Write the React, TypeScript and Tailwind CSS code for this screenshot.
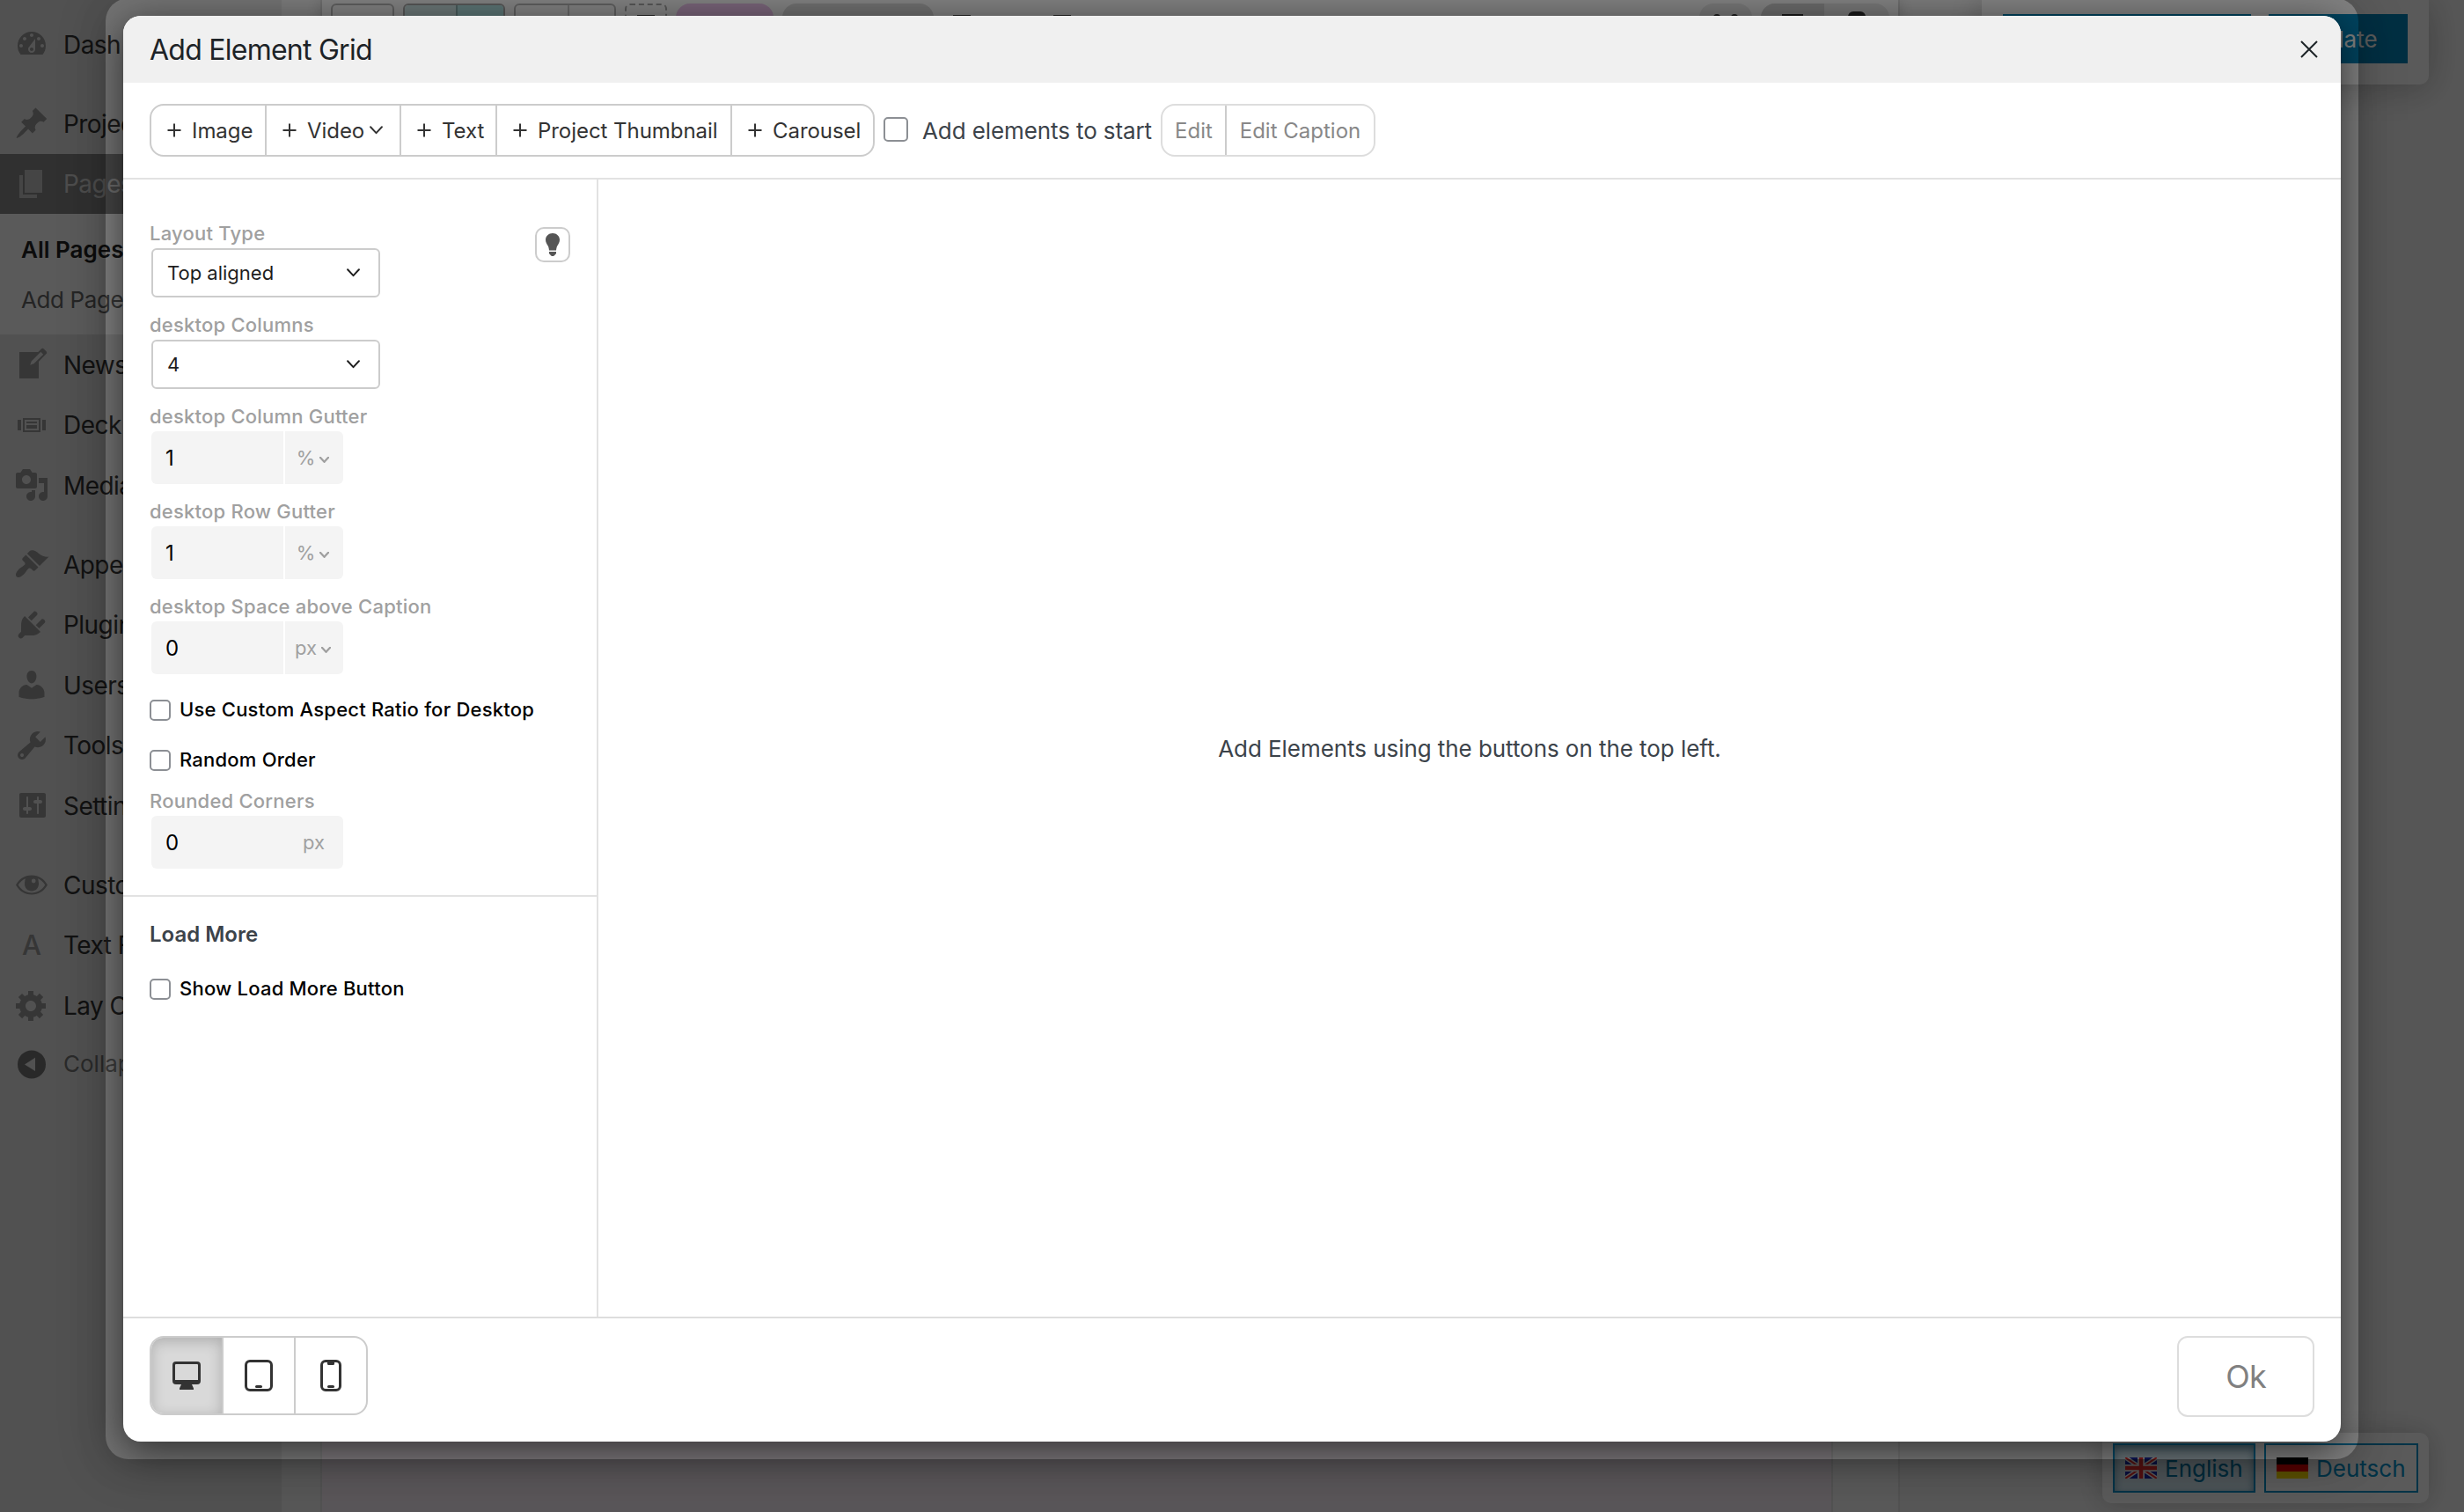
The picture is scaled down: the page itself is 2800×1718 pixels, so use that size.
import { ReactNode } from 'react';
import clsx from 'clsx';

interface MenuEntry {
    label: string;
    icon: ReactNode;
    active?: boolean;
}

const paths = {
    dashboard: 'M3.76 16h12.48c1.1-1.37 1.76-3.11 1.76-5 0-4.42-3.58-8-8-8s-8 3.58-8 8c0 1.89.66 3.63 1.76 5zM10 4c.55 0 1 .45 1 1s-.45 1-1 1-1-.45-1-1 .45-1 1-1zM6 6c.55 0 1 .45 1 1s-.45 1-1 1-1-.45-1-1 .45-1 1-1zm8 0c.55 0 1 .45 1 1s-.45 1-1 1-1-.45-1-1 .45-1 1-1zm-5.37 5.55L12 7v6c0 1.1-.9 2-2 2s-2-.9-2-2c0-.57.24-1.08.63-1.45zM4 10c.55 0 1 .45 1 1s-.45 1-1 1-1-.45-1-1 .45-1 1-1zm12 0c.55 0 1 .45 1 1s-.45 1-1 1-1-.45-1-1 .45-1 1-1zm-5 3c0-.55-.45-1-1-1s-1 .45-1 1 .45 1 1 1 1-.45 1-1z',
    pin: 'M10.44 3.02l1.82-1.82 6.36 6.35-1.83 1.82c-1.05-.68-2.48-.57-3.41.36l-.75.75c-.92.93-1.04 2.35-.35 3.41l-1.83 1.82-2.41-2.41-2.8 2.79c-.42.42-3.38 2.71-3.8 2.29s1.86-3.39 2.28-3.81l2.79-2.79L4.1 9.36l1.83-1.82c1.05.69 2.48.57 3.4-.36l.75-.75c.93-.92 1.05-2.35.36-3.41z',
    page: 'M6 15V2h10v13H6zm-1 1h8v2H3V5h2v11z',
    write: 'M16.89 1.2l1.41 1.41c.39.39.39 1.02 0 1.41L14 8.33V18H3V3h10.67l1.8-1.8c.4-.39 1.03-.4 1.42 0zm-5.66 8.48l5.37-5.36-1.42-1.42-5.36 5.37-.71 2.12z',
    slides: 'M5 14V6h10v8H5zm-3-1V7h2v6H2zm4-6v6h8V7H6zm10 6V7h2v6h-2zm-3-5v1H7V8h6zm0 2v2H7v-2h6z',
    media: 'M13 11V4c0-.55-.45-1-1-1h-1.67L9 1H5L3.67 3H2c-.55 0-1 .45-1 1v7c0 .55.45 1 1 1h10c.55 0 1-.45 1-1zM7 4.5c1.38 0 2.5 1.12 2.5 2.5S8.38 9.5 7 9.5 4.5 8.38 4.5 7 5.62 4.5 7 4.5zM14 6h5v10.5c0 1.38-1.12 2.5-2.5 2.5S14 17.88 14 16.5s1.12-2.5 2.5-2.5c.17 0 .34.02.5.05V9h-3V6zm-4 8.05V13h2v3.5c0 1.38-1.12 2.5-2.5 2.5S7 17.88 7 16.5 8.12 14 9.5 14c.17 0 .34.02.5.05z',
    brush: 'M14.48 11.06L7.41 3.99l1.5-1.5c.5-.56 2.3-.47 3.51.32 1.21.8 1.43 1.28 2.91 2.1 1.18.64 2.45 1.26 4.45.85zm-.71.71L6.7 4.7 4.93 6.47c-.39.39-.39 1.02 0 1.41l1.06 1.06c.39.39.39 1.03 0 1.42-.6.6-1.43 1.11-2.21 1.69-.35.26-.7.53-1.01.84C1.43 14.23.4 16.08 1.4 17.07c.99 1 2.84-.03 4.18-1.36.31-.31.58-.66.85-1.02.57-.78 1.08-1.61 1.69-2.21.39-.39 1.02-.39 1.41 0l1.06 1.06c.39.39 1.02.39 1.41 0z',
    plug: 'M13.11 4.36L9.87 7.6 8 5.73l3.24-3.24c.35-.34 1.05-.2 1.56.32.52.51.66 1.21.31 1.55zm-8 1.77l.91-1.12 9.01 9.01-1.19.84c-.71.71-2.63 1.16-3.82 1.16H6.14L4.9 17.26c-.59.59-1.54.59-2.12 0-.59-.58-.59-1.53 0-2.12l1.24-1.24v-3.88c0-1.13.4-3.19 1.09-3.89zm7.26 3.97l3.24-3.24c.34-.35 1.04-.21 1.55.31.52.51.66 1.21.31 1.55l-3.24 3.25z',
    user: 'M10 9.25c-2.27 0-2.73-3.44-2.73-3.44C7 4.02 7.82 2 9.97 2c2.16 0 2.98 2.02 2.71 3.81 0 0-.41 3.44-2.68 3.44zm0 2.57L12.72 10c2.39 0 4.52 2.33 4.52 4.53v2.49s-3.65 1.13-7.24 1.13c-3.65 0-7.24-1.13-7.24-1.13v-2.49c0-2.25 1.94-4.48 4.47-4.48z',
    wrench: 'M16.68 9.77c-1.34 1.34-3.3 1.67-4.95.99l-5.41 6.52c-.99.99-2.59.99-3.58 0s-.99-2.59 0-3.57l6.52-5.42c-.68-1.65-.35-3.61.99-4.95 1.28-1.28 3.12-1.62 4.72-1.06l-2.89 2.89 2.82 2.82 2.86-2.87c.53 1.58.18 3.39-1.08 4.65zM3.81 16.21c.4.39 1.04.39 1.43 0 .4-.4.4-1.04 0-1.43-.39-.4-1.03-.4-1.43 0-.39.39-.39 1.03 0 1.43z',
    sliders: 'M18 16V4c0-.55-.45-1-1-1H4c-.55 0-1 .45-1 1v12c0 .55.45 1 1 1h13c.55 0 1-.45 1-1zM8 11h1c.55 0 1 .45 1 1s-.45 1-1 1H8v1.5c0 .28-.22.5-.5.5s-.5-.22-.5-.5V13H6c-.55 0-1-.45-1-1s.45-1 1-1h1V5.5c0-.28.22-.5.5-.5s.5.22.5.5V11zm5-2h-1c-.55 0-1-.45-1-1s.45-1 1-1h1V5.5c0-.28.22-.5.5-.5s.5.22.5.5V7h1c.55 0 1 .45 1 1s-.45 1-1 1h-1v5.5c0 .28-.22.5-.5.5s-.5-.22-.5-.5V9z',
    eye: 'M10 4.8C6 4.8 2.8 7 1 10.3c1.8 3.3 5 5.5 9 5.5s7.2-2.2 9-5.5C17.2 7 14 4.8 10 4.8zm0 9.9c-3.3 0-6-1.7-7.6-4.4C3.3 8.6 4.8 7.3 6.5 6.6 6.2 7.3 6 8.8 6 9.8c0 2.2 1.8 4 4 4s4-1.800 4-4c0-1-.2-2.500-.5-3.200 1.700.7 3.200 2 4.100 3.700-1.600 2.700-4.300 4.400-7.600 4.400zM11.100 6.800a1.200 1.200 0 110 2.400 1.200 1.200 0 010-2.400z',
    gear: 'M18 12h-2.18c-.17.7-.44 1.35-.81 1.93l1.54 1.54-2.1 2.1-1.54-1.54c-.58.36-1.23.63-1.91.79V19H8v-2.18c-.68-.16-1.33-.43-1.91-.79l-1.54 1.54-2.12-2.12 1.54-1.54c-.36-.58-.63-1.23-.79-1.91H1V9.03h2.17c.16-.7.44-1.35.8-1.94L2.43 5.55l2.1-2.1 1.54 1.54c.58-.37 1.24-.64 1.93-.81V2h3v2.18c.68.16 1.33.43 1.91.79l1.54-1.54 2.12 2.12-1.54 1.54c.36.59.64 1.24.8 1.94H18V12zm-8.5 1.5c1.66 0 3-1.34 3-3s-1.34-3-3-3-3 1.34-3 3 1.34 3 3 3z',
    collapse: 'M10 2.2a8 8 0 100 16 8 8 0 000-16zM12 6.400v7.600L6 10.200z',
};

function Glyph({ d }: { d: string }) {
    return (
        <svg viewBox="0 0 20 20" className="w-10 h-10 shrink-0" fill="currentColor" fillRule="evenodd">
            <path d={d} />
        </svg>
    );
}

const firstGroup: MenuEntry[] = [
    { label: 'Projec', icon: <Glyph d={paths.pin} /> },
    { label: 'Pages', icon: <Glyph d={paths.page} />, active: true },
];

const contentGroup: MenuEntry[] = [
    { label: 'News', icon: <Glyph d={paths.write} /> },
    { label: 'Deck', icon: <Glyph d={paths.slides} /> },
    { label: 'Media', icon: <Glyph d={paths.media} /> },
];

const adminGroup: MenuEntry[] = [
    { label: 'Appe', icon: <Glyph d={paths.brush} /> },
    { label: 'Plugin', icon: <Glyph d={paths.plug} /> },
    { label: 'Users', icon: <Glyph d={paths.user} /> },
    { label: 'Tools', icon: <Glyph d={paths.wrench} /> },
    { label: 'Settin', icon: <Glyph d={paths.sliders} /> },
];

const themeGroup: MenuEntry[] = [
    { label: 'Custo', icon: <Glyph d={paths.eye} /> },
    { label: 'Text F', icon: <span className="w-10 text-center text-[31px] font-medium">A</span> },
    { label: 'Lay O', icon: <Glyph d={paths.gear} /> },
];

function MenuGroup({ items }: { items: MenuEntry[] }) {
    return (
        <ul>
            {items.map(item => (
                <li key={item.label} className={clsx('h-[68.5px] pl-4 flex items-center gap-4', item.active && 'bg-[#888]')}>
                    <span className={clsx('flex', item.active ? 'text-[#c4c4c4]' : 'text-[#999]')}>{item.icon}</span>
                    <span className={clsx('pt-px text-[28px] tracking-[-0.55px] whitespace-nowrap', item.active ? 'text-[#d8d8d8]' : 'text-[#333]')}>{item.label}</span>
                </li>
            ))}
        </ul>
    );
}

function AdminMenu() {
    return (
        <aside className="w-80 shrink-0 pt-4 bg-[#e5e5e5]">
            <MenuGroup items={[{ label: 'Dash', icon: <Glyph d={paths.dashboard} /> }]} />
            <div className="h-[21.5px]" />
            <MenuGroup items={firstGroup} />
            <div className="h-[137px] pt-3 pl-6 bg-white text-[26px]">
                <div className="h-[57px] flex items-center font-semibold text-[#222]">All Pages</div>
                <div className="h-[57px] flex items-center tracking-[-0.4px] text-[#686868]">Add Page</div>
            </div>
            <MenuGroup items={contentGroup} />
            <div className="h-[21.5px]" />
            <MenuGroup items={adminGroup} />
            <div className="h-[21.5px]" />
            <MenuGroup items={themeGroup} />
            <div className="h-[64px] pl-4 flex items-center gap-4 text-[26px] text-[#777] whitespace-nowrap">
                <Glyph d={paths.collapse} />
                Collap
            </div>
        </aside>
    );
}

// Page builder behind the dialog
function Builder() {
    return (
        <main className="flex-1 pl-[44px] flex">
            <div className="w-[1795px] border-x-2 border-[#e6e6e6] bg-[#fbfbfb] flex flex-col">
                <div className="h-[60px] pl-[10px] pt-1 flex bg-white shadow-[0_0_20px_rgba(0,0,0,0.2)]">
                    <div className="w-[72px] h-10 border-2 border-[#bbb] rounded-md mr-[10px]" />
                    <div className="w-[116px] h-10 border-2 border-[#aaa] rounded-md mr-[10px] flex overflow-hidden">
                        <div className="w-[60px] bg-[#d3eaea] border-r-2 border-[#8fb3b3]" />
                        <div className="flex-1 bg-[#b4e6e6]" />
                    </div>
                    <div className="w-[116px] h-10 border-2 border-[#bbb] rounded-md mr-[10px] flex">
                        <div className="w-[61px] border-r-2 border-[#ccc]" />
                    </div>
                    <div className="w-12 h-10 border-2 border-dashed border-[#aaa] rounded-md mr-[10px] flex justify-center pt-[11px]">
                        <div className="w-5 h-1 bg-[#444]" />
                    </div>
                    <div className="w-[111px] h-10 rounded-2xl bg-[#eec4ee] mr-[10px]" />
                    <div className="w-[172px] h-10 rounded-2xl bg-[#dcdcdc] mr-[22px]" />
                    <div className="w-5 h-1 mt-[13px] bg-[#444] mr-[94px]" />
                    <div className="w-5 h-1 mt-[13px] bg-[#444]" />
                    <div className="w-[60px] h-10 rounded-2xl bg-[#eaeaea] ml-auto mr-[10px] flex justify-center gap-3 pt-3">
                        <div className="w-2 h-2 rounded-full bg-[#333]" />
                        <div className="w-2 h-2 rounded-full bg-[#333]" />
                    </div>
                    <div className="w-[146px] h-10 rounded-2xl bg-[#eaeaea] mr-[10px] flex overflow-hidden">
                        <div className="w-[72px] bg-[#d2d2d2] flex justify-center pt-3">
                            <div className="w-6 h-2 bg-[#333]" />
                        </div>
                        <div className="flex-1 flex justify-center pt-[9px]">
                            <div className="w-5 h-8 rounded-md bg-[#333]" />
                        </div>
                    </div>
                </div>
                <div className="flex-1 w-[1717px] bg-[#fdf3fa] border-r-2 border-[#e6e6e6]" />
            </div>
        </main>
    );
}

function PublishBar() {
    return (
        <div className="absolute top-0 right-[40px] w-[508px] h-24 pt-4 pr-6 flex justify-end gap-5 bg-white rounded-b-[10px] shadow-[0_4px_40px_rgba(0,0,0,0.25)]">
            <div className="w-[282px] h-14 bg-[#0085ba]" />
            <div className="w-[158px] h-14 bg-[#0085ba] text-white text-[26px] flex items-center justify-center">Update</div>
        </div>
    );
}

function FlagUK() {
    return (
        <svg viewBox="0 0 36 24" className="w-9 h-6">
            <rect width="36" height="24" fill="#1c2cb0" />
            <path d="M0 0l36 24M36 0L0 24" stroke="#fff" strokeWidth="5" />
            <path d="M0 0l36 24M36 0L0 24" stroke="#f03030" strokeWidth="2" />
            <path d="M18 0v24M0 12h36" stroke="#fff" strokeWidth="8" />
            <path d="M18 0v24M0 12h36" stroke="#f03030" strokeWidth="4.5" />
        </svg>
    );
}

function FlagDE() {
    return (
        <svg viewBox="0 0 36 24" className="w-9 h-6">
            <rect width="36" height="8" fill="#000" />
            <rect y="8" width="36" height="8" fill="#f00000" />
            <rect y="16" width="36" height="8" fill="#ffe000" />
        </svg>
    );
}

function LanguageSwitch() {
    return (
        <div className="absolute right-10 bottom-[10px] w-[371px] h-20 p-3 flex gap-[10px] bg-white rounded-[10px] shadow-[0_0_30px_rgba(0,0,0,0.2)] text-[26px] text-[#0090c8]">
            <div className="w-[162px] h-14 pl-3 flex items-center gap-[9px] border-2 border-[#0090c8] bg-[#d8edf6] shadow-[inset_0_4px_10px_rgba(0,80,115,0.5)] text-[#0077a5]">
                <FlagUK />
                English
            </div>
            <div className="w-[175px] h-14 pl-3 flex items-center gap-[9px] border-2 border-[#0090c8]">
                <FlagDE />
                Deutsch
            </div>
        </div>
    );
}

function Chevron({ small }: { small?: boolean }) {
    return (
        <svg viewBox="0 0 14 9" className={small ? 'w-[11px] h-[7px] mt-1' : 'w-[15px] h-[10px]'} fill="none" stroke="currentColor" strokeWidth={small ? 3 : 1.8} strokeLinecap="round" strokeLinejoin="round">
            <path d="M1 1l6 6.500L13 1" />
        </svg>
    );
}

function AddButton({ label, className, dropdown }: { label: string, className: string, dropdown?: boolean }) {
    return (
        <button className={clsx('pl-[18px] flex items-center border-[#ccc] text-left whitespace-nowrap', className)}>
            <svg viewBox="0 0 16 16" className="w-4 h-4 mr-3" stroke="currentColor" strokeWidth="2">
                <path d="M8 .5v15M.5 8h15" />
            </svg>
            <span className="pt-0.5 tracking-[-0.05px]">{label}</span>
            {dropdown && <span className="ml-[6px]"><Chevron /></span>}
        </button>
    );
}

function FieldLabel({ children }: { children: ReactNode }) {
    return <div className="h-8 pb-0.5 flex items-center text-[22px] font-medium tracking-[0.22px] text-[#a0a0a0] whitespace-nowrap">{children}</div>;
}

function SelectField({ label, value }: { label: string, value: string }) {
    return (
        <div>
            <FieldLabel>{label}</FieldLabel>
            <div className="ml-0.5 w-[260px] h-14 pl-4 pr-[21px] flex items-center justify-between border-2 border-[#ccc] rounded-md text-[22px] text-[#1e1e1e]">
                {value}
                <Chevron />
            </div>
        </div>
    );
}

function UnitField({ label, value, unit, fixed }: { label: string, value: string, unit: string, fixed?: boolean }) {
    return (
        <div>
            <FieldLabel>{label}</FieldLabel>
            <div className={clsx('ml-0.5 w-[218px] h-[60px] flex rounded-md overflow-hidden', !fixed && 'gap-0.5')}>
                <div className="w-[150px] pl-4 pt-0.5 flex items-center bg-[#f4f4f4] text-2xl text-black">{value}</div>
                <div className={clsx('flex-1 flex items-center bg-[#f4f4f4] text-[22px] text-[#a0a0a0]', fixed ? 'pl-[22px]' : 'justify-center gap-[5px] pr-[3px]')}>
                    {unit}
                    {!fixed && <Chevron small />}
                </div>
            </div>
        </div>
    );
}

function CheckRow({ label }: { label: string }) {
    return (
        <label className="h-6 flex items-center gap-[10px] text-[22px] font-medium tracking-[0.22px] text-black whitespace-nowrap">
            <span className="w-6 h-6 border-2 border-[#8c8f94] rounded-[5px]" />
            <span className="-mt-0.5">{label}</span>
        </label>
    );
}

function SettingsPanel() {
    return (
        <div className="w-[540px] shrink-0 border-r-2 border-[#e2e2e2]">
            <div className="h-[815px] pl-[30px] pr-[30px] pt-[46px] flex justify-between border-b-2 border-[#e2e2e2]">
                <div className="flex flex-col">
                    <div className="flex flex-col gap-4">
                        <SelectField label="Layout Type" value="Top aligned" />
                        <SelectField label="desktop Columns" value="4" />
                        <UnitField label="desktop Column Gutter" value="1" unit="%" />
                        <UnitField label="desktop Row Gutter" value="1" unit="%" />
                        <UnitField label="desktop Space above Caption" value="0" unit="px" />
                    </div>
                    <div className="pt-[29px] pb-[19px] flex flex-col gap-[33px]">
                        <CheckRow label="Use Custom Aspect Ratio for Desktop" />
                        <CheckRow label="Random Order" />
                    </div>
                    <UnitField label="Rounded Corners" value="0" unit="px" fixed />
                </div>
                <button className="w-10 h-10 mt-2 -ml-10 shrink-0 flex items-center justify-center border-2 border-[#ccc] rounded-[10px] text-[#555]">
                    <svg viewBox="0 0 16 26" className="w-4 h-[26px]" fill="currentColor">
                        <path d="M8 0C3.500 0 0 3.300 0 7.500c0 3 1.500 4.900 2.800 7 .8 1.400 1 3.500 1.200 5h8c.2-1.500.4-3.600 1.200-5 1.300-2.100 2.800-4 2.800-7C16 3.300 12.500 0 8 0zM4 21h8v1.800c0 .6-.6 1.200-1.200 1.400-.4 1-1.500 1.800-2.800 1.800s-2.400-.8-2.800-1.800C4.600 24 4 23.400 4 22.800z" />
                    </svg>
                </button>
            </div>
            <div className="pl-[30px] pt-7">
                <h3 className="h-[30px] leading-[30px] mb-[35px] text-2xl font-semibold text-[#3c434a]">Load More</h3>
                <CheckRow label="Show Load More Button" />
            </div>
        </div>
    );
}

function DeviceSwitch() {
    return (
        <div className="w-[248px] h-[90px] flex border-2 border-[#ccc] rounded-2xl overflow-hidden text-[#333]">
            <button className="w-[82px] flex items-center justify-center bg-[#d9d9d9] border-r-2 border-[#ccc] shadow-[inset_0_4px_16px_rgba(0,0,0,0.2)]">
                <svg viewBox="0 0 32 32" className="w-8 h-8" fill="currentColor" fillRule="evenodd">
                    <path d="M4 0h24a4 4 0 014 4v18a4 4 0 01-4 4h-6l2 4.500V32H8v-1.500L10 26H4a4 4 0 01-4-4V4a4 4 0 014-4zm0 3a1 1 0 00-1 1v17h26V4a1 1 0 00-1-1z" />
                </svg>
            </button>
            <button className="w-[82px] flex items-center justify-center border-r-2 border-[#ccc]">
                <svg viewBox="0 0 32 36" className="w-8 h-9" fill="none" stroke="currentColor" strokeWidth="3">
                    <rect x="1.5" y="1.5" width="29" height="33" rx="4.5" />
                    <path d="M13.500 30.500h5" strokeLinecap="round" />
                </svg>
            </button>
            <button className="flex-1 flex items-center justify-center">
                <svg viewBox="0 0 24 36" className="w-6 h-9" fill="none" stroke="currentColor" strokeWidth="3">
                    <rect x="1.5" y="1.5" width="21" height="33" rx="4.5" />
                    <path d="M9.500 30.500h5" strokeLinecap="round" />
                    <path d="M8 2h8v2.500a1.500 1.500 0 01-1.500 1.500h-5A1.500 1.500 0 018 4.500z" fill="currentColor" stroke="none" />
                </svg>
            </button>
        </div>
    );
}

function ElementGridDialog() {
    return (
        <div className="absolute left-[140px] top-[18px] w-[2520px] h-[1620px] flex flex-col bg-white rounded-[20px] overflow-hidden">
            <header className="h-[76px] shrink-0 pl-[30px] pr-[26px] flex items-center justify-between bg-[#f0f0f0] text-[#1d2327]">
                <h2 className="pt-0.5 text-[32px] tracking-[-0.75px]">Add Element Grid</h2>
                <svg viewBox="0 0 20 20" className="w-5 h-5" stroke="currentColor" strokeWidth="2">
                    <path d="M1 1l18 18M19 1L1 19" />
                </svg>
            </header>

            {/* Toolbar */}
            <div className="h-[110px] shrink-0 pl-[30px] flex items-center border-b-2 border-[#e2e2e2] text-2xl text-[#333]">
                <div className="w-[824px] h-[60px] flex border-2 border-[#ccc] rounded-2xl">
                    <AddButton label="Image" className="w-[131px] border-r-2" />
                    <AddButton label="Video" className="w-[153px] border-r-2" dropdown />
                    <AddButton label="Text" className="w-[109px] border-r-2" />
                    <AddButton label="Project Thumbnail" className="w-[267px] border-r-2" />
                    <AddButton label="Carousel" className="w-[160px]" />
                </div>
                <span className="w-7 h-7 ml-[10px] mr-4 -mt-0.5 border-2 border-[#8c8f94] rounded-[5px]" />
                <span className="w-[271px] pt-0.5 text-[26px] tracking-[-0.1px] text-[#3c434a] whitespace-nowrap">Add elements to start</span>
                <div className="w-[244px] h-[60px] flex border-2 border-[#ddd] rounded-2xl text-[#888]">
                    <button className="w-[73px] pt-0.5 border-r-2 border-[#ccc]">Edit</button>
                    <button className="flex-1 pt-0.5 whitespace-nowrap">Edit Caption</button>
                </div>
            </div>

            <div className="flex-1 flex">
                <SettingsPanel />
                <div className="flex-1 flex items-center justify-center text-[26px] tracking-[-0.06px] text-[#3c434a]">
                    Add Elements using the buttons on the top left.
                </div>
            </div>

            <footer className="h-[142px] shrink-0 pt-5 px-[30px] flex justify-between border-t-2 border-[#ddd]">
                <DeviceSwitch />
                <button className="w-[156px] h-[92px] border-2 border-[#ddd] rounded-xl text-4xl tracking-[-0.8px] text-[#808080]">Ok</button>
            </footer>
        </div>
    );
}

export default function App() {
    return (
        <div className="relative w-[2800px] h-[1718px] overflow-hidden flex bg-[#f5f5f5] font-[Inter,sans-serif]">
            <AdminMenu />
            <Builder />
            <PublishBar />
            <LanguageSwitch />

            {/* Backdrop, slightly lighter in a frame around the dialog */}
            <div className="absolute inset-0 bg-black/50" />
            <div className="absolute left-[120px] top-[-2px] w-[2560px] h-[1660px] rounded-[26px] shadow-[0_0_0_3000px_rgba(0,0,0,0.29),0_6px_60px_rgba(0,0,0,0.15)]" />
            <div className="absolute left-[140px] top-[18px] w-[2520px] h-[1620px] rounded-[20px] shadow-[0_10px_44px_rgba(0,0,0,0.6)]" />
            <ElementGridDialog />
        </div>
    );
}
